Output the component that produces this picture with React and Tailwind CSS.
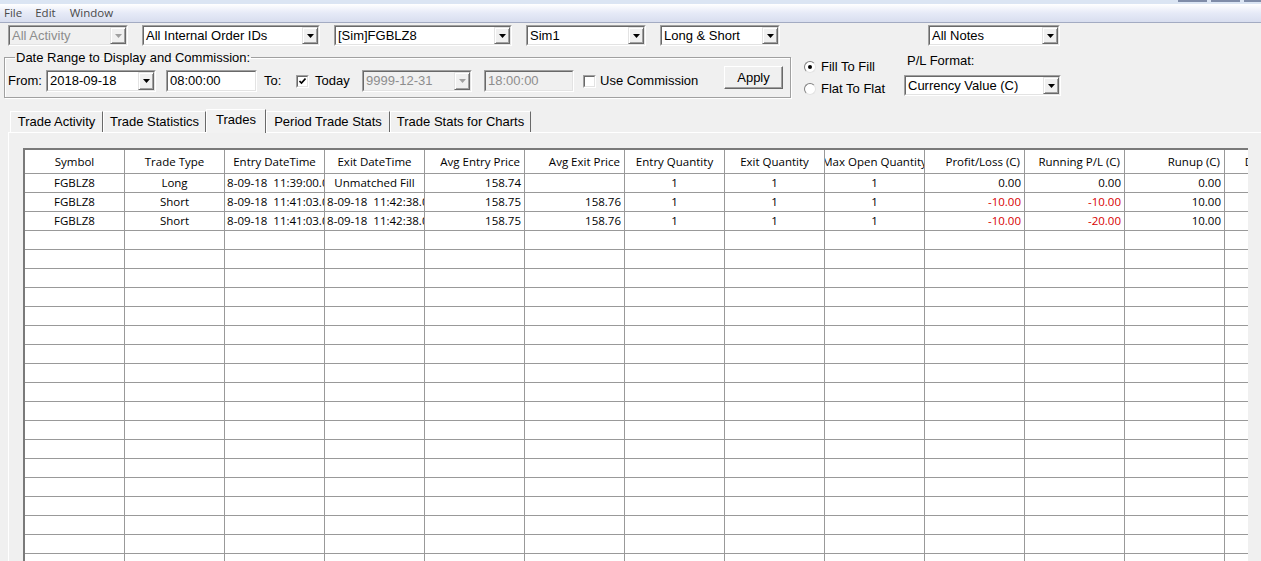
import React from 'react';

// Trades report window: filter controls on top, tabbed grid below.

const columns = [
  { key: 'sym', title: 'Symbol', align: 'center' },
  { key: 'type', title: 'Trade Type', align: 'center' },
  { key: 'entry', title: 'Entry DateTime', align: 'center' },
  { key: 'exit', title: 'Exit DateTime', align: 'center' },
  { key: 'avgEntry', title: 'Avg Entry Price', align: 'right' },
  { key: 'avgExit', title: 'Avg Exit Price', align: 'right' },
  { key: 'eq', title: 'Entry Quantity', align: 'center' },
  { key: 'xq', title: 'Exit Quantity', align: 'center' },
  { key: 'mq', title: 'Max Open Quantity', align: 'center' },
  { key: 'pl', title: 'Profit/Loss (C)', align: 'right' },
  { key: 'run', title: 'Running P/L (C)', align: 'right' },
  { key: 'runup', title: 'Runup (C)', align: 'right' },
  { key: 'dd', title: 'Drawdown (C)', align: 'right' },
];

const trades = [
  {
    sym: 'FGBLZ8', type: 'Long', entry: '2018-09-18  11:39:00.000', exit: 'Unmatched Fill',
    avgEntry: '158.74', avgExit: '', eq: '1', xq: '1', mq: '1', pl: '0.00', run: '0.00', runup: '0.00', dd: '',
  },
  {
    sym: 'FGBLZ8', type: 'Short', entry: '2018-09-18  11:41:03.000', exit: '2018-09-18  11:42:38.000',
    avgEntry: '158.75', avgExit: '158.76', eq: '1', xq: '1', mq: '1', pl: '-10.00', run: '-10.00', runup: '10.00', dd: '',
  },
  {
    sym: 'FGBLZ8', type: 'Short', entry: '2018-09-18  11:41:03.000', exit: '2018-09-18  11:42:38.000',
    avgEntry: '158.75', avgExit: '158.76', eq: '1', xq: '1', mq: '1', pl: '-10.00', run: '-20.00', runup: '10.00', dd: '',
  },
];

const emptyRows = Array.from({ length: 18 }, (_, i) => i);

const tabs = [
  { label: 'Trade Activity', w: 'w-[93px]' },
  { label: 'Trade Statistics', w: 'w-[103px]' },
  { label: 'Trades', w: 'w-[60px]', active: true },
  { label: 'Period Trade Stats', w: 'w-[124px]' },
  { label: 'Trade Stats for Charts', w: 'w-[141px]' },
];

const Sunken = ({ className = '', inner = 'bg-white', children }) => (
  <div className={`border border-t-[#a0a0a0] border-l-[#a0a0a0] border-r-white border-b-white ${className}`}>
    <div className={`flex h-full border border-t-[#696969] border-l-[#696969] border-r-[#e3e3e3] border-b-[#e3e3e3] ${inner}`}>
      {children}
    </div>
  </div>
);

const DropArrow = ({ disabled }) => (
  <div className="flex h-full w-[16px] shrink-0 items-center justify-center border border-t-[#e3e3e3] border-l-[#e3e3e3] border-r-[#696969] border-b-[#696969] bg-[#f0f0f0] shadow-[inset_1px_1px_0_#fff,inset_-1px_-1px_0_#a0a0a0]">
    <svg width="7" height="4" viewBox="0 0 7 4">
      <path d="M0 0h7L3.5 4z" fill={disabled ? '#a0a0a0' : '#000'} />
    </svg>
  </div>
);

const Combo = ({ value, className, disabled }) => (
  <Sunken className={`h-[21px] ${className}`} inner={disabled ? 'bg-[#f0f0f0]' : 'bg-white'}>
    <div
      className={`flex flex-1 items-center overflow-hidden whitespace-nowrap pl-[2px] ${
        disabled ? 'text-[#8d8d8d]' : 'text-black'
      }`}
    >
      {value}
    </div>
    <DropArrow disabled={disabled} />
  </Sunken>
);

const TextBox = ({ value, className, disabled }) => (
  <Sunken className={`h-[22px] ${className}`} inner={disabled ? 'bg-[#f0f0f0]' : 'bg-white'}>
    <div className={`flex flex-1 items-center pl-[2px] ${disabled ? 'text-[#8d8d8d]' : 'text-black'}`}>{value}</div>
  </Sunken>
);

const CheckBox = ({ checked }) => (
  <div className="h-[13px] w-[13px] shrink-0 border border-t-[#a0a0a0] border-l-[#a0a0a0] border-r-white border-b-white">
    <div className="flex h-full w-full items-center justify-center border border-t-[#696969] border-l-[#696969] border-r-[#e3e3e3] border-b-[#e3e3e3] bg-white">
      {checked && (
        <svg width="7" height="7" viewBox="0 0 7 7">
          <path d="M0.5 3l2 2 4-4.5" fill="none" stroke="#000" strokeWidth="1.6" />
        </svg>
      )}
    </div>
  </div>
);

const Radio = ({ checked, label }) => (
  <div className="flex h-[22px] items-center">
    <div className="flex h-[12px] w-[12px] items-center justify-center rounded-full border border-t-[#808080] border-l-[#808080] border-r-[#e3e3e3] border-b-[#e3e3e3] bg-white">
      {checked && <div className="h-[4px] w-[4px] rounded-full bg-black" />}
    </div>
    <span className="ml-[5px]">{label}</span>
  </div>
);

const cellAlign = (align) => (align === 'right' ? 'justify-end pr-[4px]' : 'justify-center');

export default function App() {
  return (
    <div className="h-[561px] w-[1261px] overflow-hidden bg-[#f0f0f0] font-['Liberation_Sans',Arial,sans-serif] text-[13px] text-black">
      {/* window frame top + menu */}
      <div className="flex h-[4px] justify-end bg-[#dbe5f3]">
        <div className="h-[2px] w-[29px] bg-[#7f8ca8]" />
        <div className="ml-[4px] h-[2px] w-[29px] bg-[#7f8ca8]" />
        <div className="ml-[4px] h-[2px] w-[17px] bg-[#7f8ca8]" />
      </div>
      <div className="flex h-[19px] items-center gap-[14px] border-b border-[#a3abc2] bg-gradient-to-b from-white via-[#e6eaf7] to-[#d8deef] pl-[4px] font-['Open_Sans',sans-serif] text-[11.5px] text-[#4a4a4a]">
        <span>File</span>
        <span className="-ml-[1px]">Edit</span>
        <span>Window</span>
      </div>

      <div className="pl-[4px]">
        {/* filter combos */}
        <div className="ml-[4px] mt-[2px] flex h-[21px]">
          <Combo value="All Activity" className="w-[120px]" disabled />
          <Combo value="All Internal Order IDs" className="ml-[14px] w-[178px]" />
          <Combo value="[Sim]FGBLZ8" className="ml-[14px] w-[178px]" />
          <Combo value="Sim1" className="ml-[14px] w-[120px]" />
          <Combo value="Long & Short" className="ml-[14px] w-[120px]" />
          <Combo value="All Notes" className="ml-[148px] w-[132px]" />
        </div>

        {/* date range, fill mode, P/L format */}
        <div className="mt-[4px] flex items-start">
          <fieldset className="w-[787px] border border-[#a0a0a0] pb-[5px] pl-[3px] shadow-[inset_1px_1px_0_#fff,1px_1px_0_#fff]">
            <legend className="ml-[7px] px-[1px] leading-[15px]">Date Range to Display and Commission:</legend>
            <div className="flex h-[27px] items-end">
              <div className="flex h-[22px] w-[38px] items-center">From:</div>
              <Combo value="2018-09-18" className="h-[22px] w-[110px]" />
              <TextBox value="08:00:00" className="ml-[10px] w-[91px]" />
              <div className="ml-[7px] flex h-[22px] w-[32px] items-center">To:</div>
              <div className="flex h-[22px] items-center">
                <CheckBox checked />
              </div>
              <div className="ml-[6px] flex h-[22px] w-[47px] items-center">Today</div>
              <Combo value="9999-12-31" className="h-[22px] w-[110px]" disabled />
              <TextBox value="18:00:00" className="ml-[12px] w-[90px]" disabled />
              <div className="ml-[9px] flex h-[22px] items-center">
                <CheckBox />
              </div>
              <div className="ml-[4px] flex h-[22px] w-[124px] items-center">Use Commission</div>
              <button
                type="button"
                className="mb-[3px] h-[23px] w-[59px] border border-t-white border-l-white border-r-[#696969] border-b-[#696969] bg-[#f0f0f0] shadow-[inset_-1px_-1px_0_#a0a0a0]"
              >
                Apply
              </button>
            </div>
          </fieldset>

          <div className="ml-[13px] mt-[6px] w-[100px]">
            <Radio checked label="Fill To Fill" />
            <Radio label="Flat To Flat" />
          </div>

          <div className="mt-[3px]">
            <div className="h-[15px] pl-[3px] leading-[15px]">P/L Format:</div>
            <Combo value="Currency Value (C)" className="mt-[7px] w-[157px]" />
          </div>
        </div>

        {/* tab strip */}
        <div className="ml-[6px] mt-[9px] flex h-[23px] items-end">
          {tabs.map((t) =>
            t.active ? (
              <div
                key={t.label}
                className={`relative z-10 -mb-[1px] flex h-[24px] ${t.w} items-center justify-center border-l border-t border-r border-t-white border-l-white border-r-[#696969] bg-[#f2f2f2] pb-[3px]`}
              >
                {t.label}
              </div>
            ) : (
              <div
                key={t.label}
                className={`flex h-[21px] ${t.w} items-center justify-center border-l border-t border-r border-t-white border-l-white border-r-[#696969] bg-[#f0f0f0]`}
              >
                {t.label}
              </div>
            )
          )}
        </div>

        {/* tab page with the trades grid */}
        <div className="ml-[4px] border-l border-t border-white pl-[14px] pt-[15px]">
          <div className="w-[1225px] overflow-hidden border-l-2 border-t-2 border-[#7a7a7a] bg-white font-['Open_Sans',sans-serif] text-[11.5px]">
            <div className="flex h-[24px] w-max border-b border-[#999]">
              {columns.map((c) => (
                <div
                  key={c.key}
                  className={`flex h-full w-[100px] shrink-0 items-center overflow-hidden whitespace-nowrap border-r border-[#999] ${cellAlign(c.align)}`}
                >
                  {c.title}
                </div>
              ))}
            </div>
            {trades.map((row, i) => (
              <div key={i} className="flex h-[19px] w-max border-b border-[#999]">
                {columns.map((c) => (
                  <div
                    key={c.key}
                    className={`flex h-full w-[100px] shrink-0 items-center overflow-hidden whitespace-pre border-r border-[#999] ${
                      c.align === 'right' ? 'justify-end pr-[3px]' : 'justify-center'
                    } ${row[c.key].startsWith('-') ? 'text-[#d80000]' : 'text-black'}`}
                  >
                    {row[c.key]}
                  </div>
                ))}
              </div>
            ))}
            {emptyRows.map((r) => (
              <div key={r} className="flex h-[19px] w-max border-b border-[#999]">
                {columns.map((c) => (
                  <div key={c.key} className="h-full w-[100px] shrink-0 border-r border-[#999]" />
                ))}
              </div>
            ))}
          </div>
        </div>
      </div>
    </div>
  );
}
